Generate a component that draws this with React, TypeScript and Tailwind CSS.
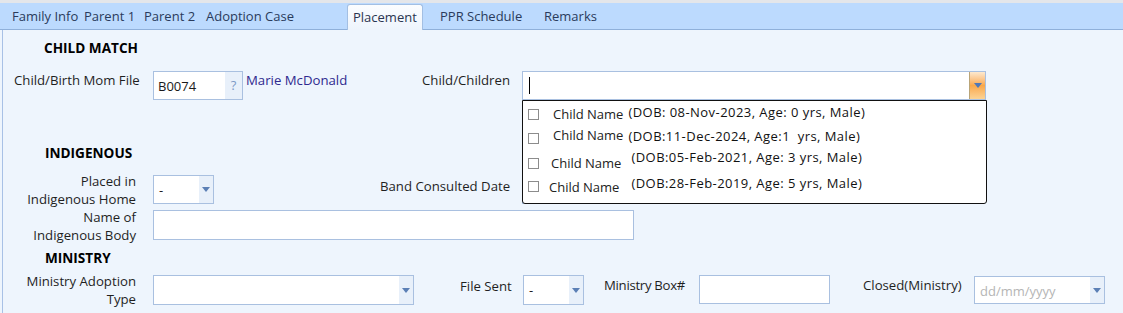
import React from "react"

const tabs = [
    { label: "Family Info", cls: "w-[72px] pl-[6px]" },
    { label: "Parent 1", cls: "w-[60px] pl-[6px]" },
    { label: "Parent 2", cls: "w-[62px] pl-[6px]" },
    { label: "Adoption Case", cls: "w-[147px] pl-[6px]" },
    { label: "Placement", cls: "w-[76px] pl-[5px]", active: true },
    { label: "PPR Schedule", cls: "w-[121px] pl-[17px]" },
    { label: "Remarks", cls: "w-[70px] pl-[0px]" },
]

const children = [
    { dob: "(DOB: 08-Nov-2023, Age: 0 yrs, Male)", box: "mt-[8px]", name: "ml-[14px] mt-[5px]", info: "ml-[5px] mt-[3px]" },
    { dob: "(DOB:11-Dec-2024, Age:1\u00a0 yrs, Male)", box: "mt-[8px]", name: "ml-[14px] mt-[2px]", info: "ml-[5px] mt-[3px]" },
    { dob: "(DOB:05-Feb-2021, Age: 3 yrs, Male)", box: "mt-[9px]", name: "ml-[12px] mt-[6px]", info: "ml-[10px] mt-[0px]" },
    { dob: "(DOB:28-Feb-2019, Age: 5 yrs, Male)", box: "mt-[8px]", name: "ml-[10px] mt-[6px]", info: "ml-[12px] mt-[2px]" },
]

function Arrow() {
    return (
        <svg width="8" height="5" viewBox="0 0 8 5">
            <path d="M0 0 L8 0 L4 5 Z" fill="#5b7fb5" />
        </svg>
    )
}

function Select({ value, placeholder, cls }: { value?: string; placeholder?: string; cls: string }) {
    return (
        <div className={`flex border border-[#a9c0e0] bg-white ${cls}`}>
            <div className="flex-1 pl-[5px] pt-[6px] text-[13px] leading-[16px] text-[#1f1f1f]">
                {value}
                {placeholder && <span className="text-[#b5b5b5]">{placeholder}</span>}
            </div>
            <div className="w-[14px] bg-[#e8f0fa] flex items-center justify-center">
                <Arrow />
            </div>
        </div>
    )
}

function Label2({ a, b }: { a: string; b: string }) {
    return (
        <div className="w-[133px] text-right leading-[18px] whitespace-nowrap">
            <div>{a}</div>
            <div>{b}</div>
        </div>
    )
}

export default function App() {
    return (
        <div className="w-[1123px] h-[313px] overflow-hidden bg-[#eef5fd] text-[#1f1f1f]" style={{ fontFamily: "'Open Sans', 'Noto Sans', sans-serif" }}>
            {/* tab strip */}
            <div className="h-[3px] bg-[#e4e6ea]" />
            <div className="h-[27px] bg-[#bcdafe] border-b border-[#8fb0da] flex pl-[6px] items-end">
                {tabs.map(t => (
                    <div
                        key={t.label}
                        className={
                            t.active
                                ? `${t.cls} shrink-0 whitespace-nowrap h-[26px] mb-[-1px] border border-b-0 border-[#a3bfe3] rounded-t-[3px] bg-gradient-to-b from-[#fbfdff] to-[#eef4fc] text-[13px] leading-[24px] text-[#2a3550]`
                                : `${t.cls} shrink-0 whitespace-nowrap h-[25px] text-[13px] leading-[24px] text-[#2a3b5c]`
                        }
                    >
                        {t.label}
                    </div>
                ))}
            </div>

            <div className="ml-[2px] border-l border-[#a8c1e6] h-[283px] flex flex-col text-[13.2px]">
                <div className="mt-[10px] ml-[41px] h-[16px] leading-[16px] font-bold text-[13.6px] text-black">CHILD MATCH</div>

                {/* child match row */}
                <div className="mt-[15px] flex items-start h-[29px]">
                    <div className="w-[150px] pl-[11px] leading-[18px] whitespace-nowrap">Child/Birth Mom File</div>
                    <div className="w-[90px] h-[29px] flex border border-[#a9c0e0] bg-white">
                        <div className="flex-1 pl-[4px] pt-[5px] leading-[18px] text-[13px] text-[#1a1a1a]">B0074</div>
                        <div className="w-[17px] bg-[#e8f0fa] text-[#7d9ac6] text-[13px] text-center pt-[4px] leading-[18px]">?</div>
                    </div>
                    <div className="ml-[3px] w-[174px] leading-[18px] text-[#2f2a8f] whitespace-nowrap">Marie McDonald</div>
                    <div className="w-[90px] leading-[18px] text-right whitespace-nowrap">Child/Children</div>
                    <div className="ml-[12px] relative w-[464px] h-[29px] flex border border-[#a9c0e0] bg-white">
                        <div className="flex-1 flex items-center pl-[6px]">
                            <div className="w-px h-[17px] bg-black" />
                        </div>
                        <div className="w-[16px] border-l border-[#b9a477] bg-gradient-to-b from-[#fde9cf] via-[#f9a84a] to-[#fbd394] flex items-center justify-center">
                            <svg width="8" height="5" viewBox="0 0 8 5">
                                <path d="M0 0 L8 0 L4 5 Z" fill="#4f78b8" />
                            </svg>
                        </div>
                        {/* dropdown list */}
                        <div className="absolute left-[-1px] top-[28px] w-[465px] h-[104px] border border-[#111] rounded-b-[3px] bg-white z-10 px-[5px]">
                            {children.map((c, i) => (
                                <div key={i} className="flex items-start h-[24px] whitespace-nowrap">
                                    <div className={`w-[11px] h-[11px] border border-[#8c8c8c] bg-white ${c.box}`} />
                                    <div className={`text-[13px] leading-[16px] text-[#222] ${c.name}`}>Child Name</div>
                                    <div className={`text-[13px] tracking-[0.45px] leading-[16px] text-[#111] ${c.info}`}>{c.dob}</div>
                                </div>
                            ))}
                        </div>
                    </div>
                </div>

                <div className="mt-[45px] ml-[42px] h-[16px] leading-[16px] font-bold text-[13.6px] text-black">INDIGENOUS</div>

                {/* placed in row */}
                <div className="mt-[11px] flex items-start">
                    <Label2 a="Placed in" b="Indigenous Home" />
                    <Select value="-" cls="ml-[17px] mt-[3px] w-[61px] h-[29px]" />
                    <div className="ml-[166px] mt-[5px] w-[131px] leading-[18px] whitespace-nowrap">Band Consulted Date</div>
                    <div className="ml-[11px] mt-[3px] w-[111px] h-[29px] border border-[#a9c0e0] bg-white" />
                </div>

                {/* name of indigenous body */}
                <div className="flex items-start">
                    <Label2 a="Name of" b="Indigenous Body" />
                    <div className="ml-[17px] mt-[2px] w-[481px] h-[30px] border border-[#a9c0e0] bg-white" />
                </div>

                <div className="mt-[6px] ml-[42px] h-[16px] leading-[16px] font-bold text-[13.6px] text-black">MINISTRY</div>

                {/* ministry row */}
                <div className="mt-[6px] flex items-start">
                    <Label2 a="Ministry Adoption" b="Type" />
                    <Select cls="ml-[17px] mt-[3px] w-[261px] h-[30px]" />
                    <div className="ml-[46px] mt-[5px] w-[52px] leading-[18px] whitespace-nowrap">File Sent</div>
                    <Select value="-" cls="ml-[11px] mt-[3px] w-[61px] h-[30px]" />
                    <div className="ml-[20px] mt-[4px] w-[80px] leading-[18px] whitespace-nowrap tracking-[-0.3px]">Ministry Box#</div>
                    <div className="ml-[15px] mt-[3px] w-[131px] h-[29px] border border-[#a9c0e0] bg-white" />
                    <div className="ml-[33px] mt-[4px] w-[101px] leading-[18px] whitespace-nowrap">Closed(Ministry)</div>
                    <Select placeholder="dd/mm/yyyy" cls="ml-[10px] mt-[4px] w-[131px] h-[28px]" />
                </div>
            </div>
        </div>
    )
}
